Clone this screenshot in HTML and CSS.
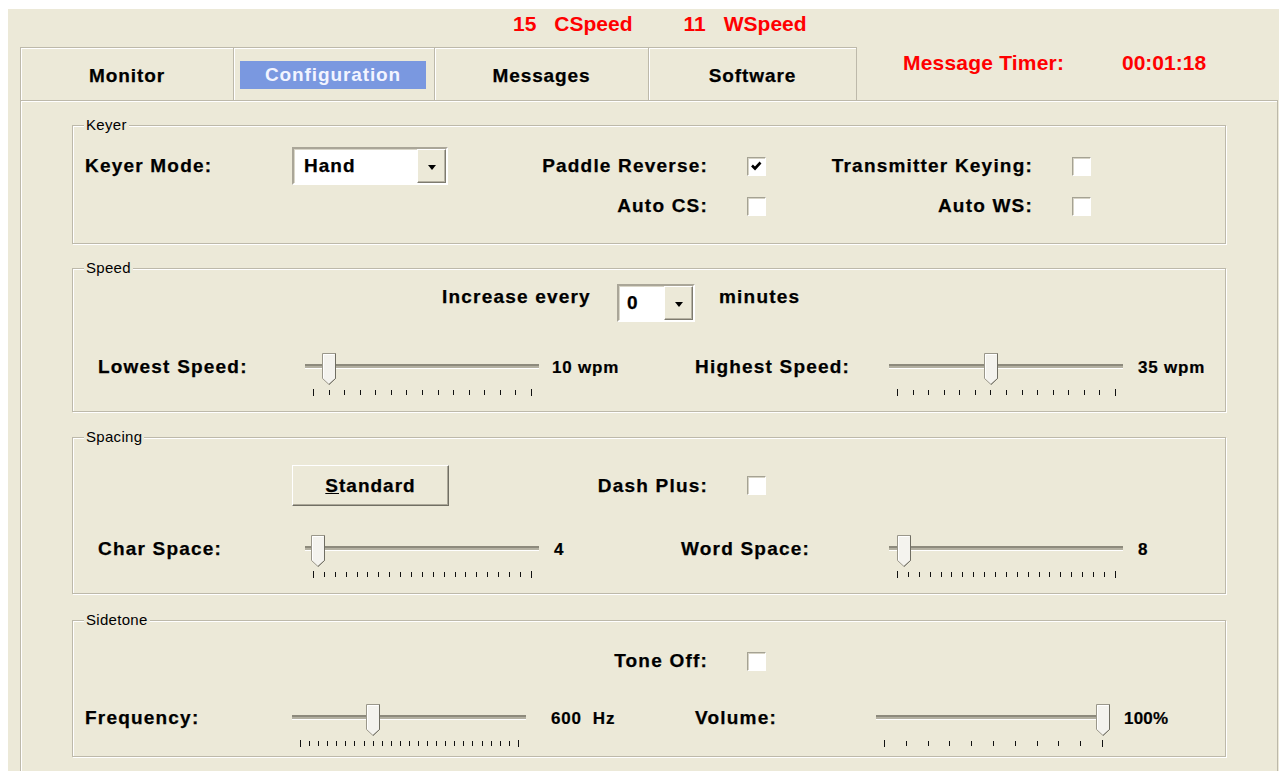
FILE: index.html
```html
<!DOCTYPE html>
<html lang="en">
<head>
<meta charset="utf-8">
<title>Keyer Configuration</title>
<link rel="stylesheet" href="styles.css">
</head>
<body>
<div class="window">
  <div class="speeds">
    <span class="spd"><span class="spd-num">15</span>CSpeed</span>
    <span class="spd spd-w"><span class="spd-num">11</span>WSpeed</span>
  </div>

  <div class="tabrow">
    <div class="tab tab-monitor">Monitor</div>
    <div class="tab tab-config"><span class="tab-sel">Configuration</span></div>
    <div class="tab tab-messages">Messages</div>
    <div class="tab tab-software">Software</div>
    <div class="timer">
      <span class="timer-label">Message Timer:</span>
      <span class="timer-value">00:01:18</span>
    </div>
  </div>

  <div class="panel">
    <!-- Keyer -->
    <div class="group g-keyer">
      <span class="legend">Keyer</span>
      <div class="keyer-grid">
        <span class="lbl">Keyer Mode:</span>
        <div class="combo combo-mode">
          <span class="combo-text">Hand</span>
          <span class="combo-btn"><span class="arrow"></span></span>
        </div>
        <span class="lbl right">Paddle Reverse:</span>
        <span class="cb-cell"><span class="cb">
          <svg width="17" height="17" viewBox="0 0 17 17"><polyline points="4,7.5 7,10.5 12.5,4.5" fill="none" stroke="#000" stroke-width="2.6"/></svg>
        </span></span>
        <span class="lbl right">Transmitter Keying:</span>
        <span class="cb-cell"><span class="cb"></span></span>

        <span></span>
        <span></span>
        <span class="lbl right">Auto CS:</span>
        <span class="cb-cell"><span class="cb"></span></span>
        <span class="lbl right">Auto WS:</span>
        <span class="cb-cell"><span class="cb"></span></span>
      </div>
    </div>

    <!-- Speed -->
    <div class="group g-speed">
      <span class="legend">Speed</span>
      <div class="row row-increase">
        <span class="lbl lbl-increase">Increase every</span>
        <div class="combo combo-small">
          <span class="combo-text">0</span>
          <span class="combo-btn"><span class="arrow"></span></span>
        </div>
        <span class="lbl lbl-minutes">minutes</span>
      </div>
      <div class="row row-slider row-speed">
        <span class="lbl slbl lbl-lowest">Lowest Speed:</span>
        <div class="slider" style="--pos:0.0714">
          <div class="track"></div>
          <div class="ticks">
            <i></i><i></i><i></i><i></i><i></i><i></i><i></i><i></i><i></i><i></i><i></i><i></i><i></i><i></i><i></i>
          </div>
          <span class="thumb"><svg width="14" height="32" viewBox="0 0 14 32"><path d="M0.5 0.5H13.5V25.5L7 31.5L0.5 25.5Z" fill="#f4f3ee" stroke="#9a978a"/><path d="M13.5 0.5V25.5L7 31.5" fill="none" stroke="#6f6d62"/><path d="M1.5 25V1.5H12.5" fill="none" stroke="#fff"/></svg></span>
        </div>
        <span class="sval val-lowest">10 wpm</span>
        <span class="lbl slbl lbl-highest">Highest Speed:</span>
        <div class="slider" style="--pos:0.4286">
          <div class="track"></div>
          <div class="ticks">
            <i></i><i></i><i></i><i></i><i></i><i></i><i></i><i></i><i></i><i></i><i></i><i></i><i></i><i></i><i></i>
          </div>
          <span class="thumb"><svg width="14" height="32" viewBox="0 0 14 32"><path d="M0.5 0.5H13.5V25.5L7 31.5L0.5 25.5Z" fill="#f4f3ee" stroke="#9a978a"/><path d="M13.5 0.5V25.5L7 31.5" fill="none" stroke="#6f6d62"/><path d="M1.5 25V1.5H12.5" fill="none" stroke="#fff"/></svg></span>
        </div>
        <span class="sval val-end">35 wpm</span>
      </div>
    </div>

    <!-- Spacing -->
    <div class="group g-spacing">
      <span class="legend">Spacing</span>
      <div class="row row-standard">
        <button class="btn" type="button"><u>S</u>tandard</button>
        <span class="lbl right lbl-dash">Dash Plus:</span>
        <span class="cb"></span>
      </div>
      <div class="row row-slider row-space">
        <span class="lbl slbl lbl-char">Char Space:</span>
        <div class="slider" style="--pos:0.02">
          <div class="track"></div>
          <div class="ticks">
            <i></i><i></i><i></i><i></i><i></i><i></i><i></i><i></i><i></i><i></i><i></i><i></i><i></i><i></i><i></i><i></i><i></i><i></i><i></i><i></i><i></i>
          </div>
          <span class="thumb"><svg width="14" height="32" viewBox="0 0 14 32"><path d="M0.5 0.5H13.5V25.5L7 31.5L0.5 25.5Z" fill="#f4f3ee" stroke="#9a978a"/><path d="M13.5 0.5V25.5L7 31.5" fill="none" stroke="#6f6d62"/><path d="M1.5 25V1.5H12.5" fill="none" stroke="#fff"/></svg></span>
        </div>
        <span class="sval val-char">4</span>
        <span class="lbl slbl lbl-word">Word Space:</span>
        <div class="slider" style="--pos:0.03">
          <div class="track"></div>
          <div class="ticks">
            <i></i><i></i><i></i><i></i><i></i><i></i><i></i><i></i><i></i><i></i><i></i><i></i><i></i><i></i><i></i><i></i><i></i><i></i><i></i><i></i><i></i>
          </div>
          <span class="thumb"><svg width="14" height="32" viewBox="0 0 14 32"><path d="M0.5 0.5H13.5V25.5L7 31.5L0.5 25.5Z" fill="#f4f3ee" stroke="#9a978a"/><path d="M13.5 0.5V25.5L7 31.5" fill="none" stroke="#6f6d62"/><path d="M1.5 25V1.5H12.5" fill="none" stroke="#fff"/></svg></span>
        </div>
        <span class="sval val-end">8</span>
      </div>
    </div>

    <!-- Sidetone -->
    <div class="group g-sidetone">
      <span class="legend">Sidetone</span>
      <div class="row row-tone">
        <span class="lbl right lbl-tone">Tone Off:</span>
        <span class="cb"></span>
      </div>
      <div class="row row-slider row-side">
        <span class="lbl slbl lbl-freq">Frequency:</span>
        <div class="slider" style="--pos:0.3333">
          <div class="track"></div>
          <div class="ticks">
            <i></i><i></i><i></i><i></i><i></i><i></i><i></i><i></i><i></i><i></i><i></i><i></i><i></i><i></i><i></i><i></i><i></i><i></i><i></i><i></i><i></i><i></i><i></i><i></i><i></i>
          </div>
          <span class="thumb"><svg width="14" height="32" viewBox="0 0 14 32"><path d="M0.5 0.5H13.5V25.5L7 31.5L0.5 25.5Z" fill="#f4f3ee" stroke="#9a978a"/><path d="M13.5 0.5V25.5L7 31.5" fill="none" stroke="#6f6d62"/><path d="M1.5 25V1.5H12.5" fill="none" stroke="#fff"/></svg></span>
        </div>
        <span class="sval val-freq">600&nbsp;&nbsp;Hz</span>
        <span class="lbl slbl lbl-volume">Volume:</span>
        <div class="slider" style="--pos:1">
          <div class="track"></div>
          <div class="ticks">
            <i></i><i></i><i></i><i></i><i></i><i></i><i></i><i></i><i></i><i></i><i></i>
          </div>
          <span class="thumb"><svg width="14" height="32" viewBox="0 0 14 32"><path d="M0.5 0.5H13.5V25.5L7 31.5L0.5 25.5Z" fill="#f4f3ee" stroke="#9a978a"/><path d="M13.5 0.5V25.5L7 31.5" fill="none" stroke="#6f6d62"/><path d="M1.5 25V1.5H12.5" fill="none" stroke="#fff"/></svg></span>
        </div>
        <span class="sval val-volume">100%</span>
      </div>
    </div>
  </div>
</div>
</body>
</html>
```

FILE: styles.css
```css
* { box-sizing: border-box; }

html, body {
  margin: 0;
  padding: 0;
  background: #fff;
}

body {
  font-family: "Liberation Sans", Arial, sans-serif;
  color: #000;
}

.window {
  margin: 9px 0 0 8px;
  width: 1271px;
  height: 762px;
  background: #ece9d8;
  overflow: hidden;
}

/* red speed readout above the tabs */
.speeds {
  height: 38px;
  padding: 4px 0 0 505px;
  display: flex;
  color: #f00;
  font-weight: bold;
  font-size: 21px;
  line-height: 22px;
}
.spd-num { margin-right: 18px; }
.spd-w { margin-left: 51px; }

/* tab strip */
.tabrow {
  display: flex;
  height: 54px;
  width: 1258px;
  margin-left: 12px;
}
.tab {
  height: 54px;
  border: 1px solid #bdb9aa;
  border-left: none;
  box-shadow: inset 1px 1px 0 #fff;
  display: flex;
  align-items: center;
  justify-content: center;
  padding-top: 4px;
  font-weight: bold;
  font-size: 19px;
  letter-spacing: 0.9px;
  -webkit-text-stroke: 0.25px #000;
}
.tab-monitor { width: 214px; border-left: 1px solid #bdb9aa; }
.tab-config { width: 201px; justify-content: flex-start; padding-left: 6px; }
.tab-messages { width: 214px; }
.tab-software { width: 208px; }

.tab-sel {
  width: 186px;
  height: 28px;
  background: #7a98e0;
  color: #f2f4ff;
  -webkit-text-stroke: 0;
  display: flex;
  align-items: center;
  justify-content: center;
  margin-top: -2px;
}

.timer {
  flex: 1;
  display: flex;
  align-items: flex-start;
  padding: 5px 0 0 46px;
  border-bottom: 1px solid #bdb9aa;
  color: #f00;
  font-weight: bold;
  font-size: 21px;
  line-height: 22px;
}
.timer-label { width: 219px; letter-spacing: 0.2px; }

/* page body under the tabs */
.panel {
  width: 1258px;
  height: 670px;
  margin-left: 12px;
  border-left: 1px solid #bdb9aa;
  border-right: 1px solid #bdb9aa;
  box-shadow: inset 1px 1px 0 #fff;
  padding: 24px 0 0 51px;
}

/* etched group boxes */
.group {
  position: relative;
  width: 1154px;
  border: 1px solid #bdb9aa;
  box-shadow: 1px 1px 0 #fff, inset 1px 1px 0 #fff;
}
.g-keyer { height: 119px; padding-top: 21px; }
.g-speed { height: 144px; margin-top: 24px; padding-top: 15px; }
.g-spacing { height: 157px; margin-top: 25px; padding-top: 27px; }
.g-sidetone { height: 137px; margin-top: 26px; padding-top: 30px; }

.legend {
  position: absolute;
  top: -10px;
  left: 11px;
  padding: 0 2px;
  background: #ece9d8;
  font-size: 15px;
  line-height: 18px;
  letter-spacing: 0.3px;
}

.lbl {
  font-weight: bold;
  font-size: 19px;
  line-height: 20px;
  letter-spacing: 1.2px;
  white-space: nowrap;
  -webkit-text-stroke: 0.25px #000;
}
.right { text-align: right; }

/* keyer rows */
.keyer-grid {
  display: grid;
  grid-template-columns: 207px 156px 260px 58px 267px 58px;
  grid-template-rows: 38px 20px;
  row-gap: 11px;
  align-items: center;
  margin-left: 12px;
}
.cb-cell { display: flex; justify-content: flex-end; }

.cb {
  display: block;
  width: 19px;
  height: 19px;
  background: #fff;
  border: 1px solid;
  border-color: #a5a293 #fff #fff #a5a293;
  box-shadow: inset 1px 1px 0 #d6d3c5;
}
.cb svg { display: block; }

/* drop-down box */
.combo {
  position: relative;
  display: flex;
  align-items: center;
  background: #fff;
  border: 2px solid;
  border-color: #aaa698 #fff #fff #aaa698;
  box-shadow: inset 1px 1px 0 #d9d6c8;
  font-weight: bold;
  font-size: 19px;
  letter-spacing: 1px;
  -webkit-text-stroke: 0.25px #000;
}
.combo-mode { width: 156px; height: 38px; padding-left: 10px; }
.combo-small { width: 78px; height: 38px; padding-left: 8px; }
.combo-text { flex: 1; }
.combo-btn {
  width: 29px;
  height: 34px;
  background: #ece9d8;
  border: 1px solid;
  border-color: #fff #7e7b6f #7e7b6f #fff;
  box-shadow: inset -1px -1px 0 #b6b2a3;
  display: flex;
  align-items: center;
  justify-content: center;
}
.arrow {
  width: 0;
  height: 0;
  border-left: 4px solid transparent;
  border-right: 4px solid transparent;
  border-top: 5px solid #000;
  margin-top: 2px;
}

/* generic rows */
.row { display: flex; }

.row-increase { margin-left: 369px; align-items: flex-start; }
.lbl-increase { width: 175px; margin-top: 3px; }
.lbl-minutes { margin-left: 24px; margin-top: 3px; }

.row-standard { margin-left: 219px; align-items: center; }
.lbl-dash { width: 259px; }
.row-standard .cb { margin-left: 39px; }

.row-tone { align-items: center; height: 20px; }
.lbl-tone { width: 635px; }
.row-tone .cb { margin-left: 39px; }

.btn {
  width: 157px;
  height: 41px;
  background: #ece9d8;
  border: 1px solid;
  border-color: #fff #716f64 #716f64 #fff;
  box-shadow: inset -1px -1px 0 #aca899;
  font-family: inherit;
  font-weight: bold;
  font-size: 19px;
  letter-spacing: 1px;
  -webkit-text-stroke: 0.25px #000;
  color: #000;
  padding: 0;
}

/* slider rows */
.row-slider { align-items: flex-start; }
.row-speed { margin-top: 31px; }
.row-space { margin-top: 29px; }
.row-side { margin-top: 33px; }

.slbl { margin-top: 4px; }
.lbl-lowest, .lbl-char { margin-left: 25px; width: 207px; }
.lbl-highest { width: 194px; }
.lbl-word { width: 208px; }
.lbl-freq { margin-left: 12px; width: 207px; }
.lbl-volume { width: 181px; }

.sval {
  margin-top: 5px;
  font-weight: bold;
  font-size: 17px;
  line-height: 20px;
  letter-spacing: 0.8px;
  white-space: nowrap;
  -webkit-text-stroke: 0.2px #000;
}
.val-lowest { width: 156px; padding-left: 13px; }
.val-char { width: 142px; padding-left: 15px; }
.val-freq { width: 169px; padding-left: 25px; }
.val-end { padding-left: 15px; }
.val-volume { padding-left: 14px; letter-spacing: 0.2px; }

.slider {
  position: relative;
  width: 234px;
  height: 43px;
  padding-top: 11px;
}
.track {
  height: 5px;
  border-top: 2px solid #8d8a7c;
  border-bottom: 1px solid #fff;
  background: #b3b0a1;
}
.ticks {
  display: flex;
  justify-content: space-between;
  align-items: flex-start;
  width: 219px;
  margin: 20px 0 0 8px;
}
.ticks i {
  display: block;
  width: 1px;
  height: 5px;
  margin-top: 1px;
  background: #111;
}
.ticks i:first-child,
.ticks i:last-child {
  height: 7px;
  margin-top: 0;
}
.thumb {
  position: absolute;
  top: 0;
  left: calc(1.5px + var(--pos) * 218px);
  width: 14px;
  height: 32px;
}
.thumb svg { display: block; }
```
